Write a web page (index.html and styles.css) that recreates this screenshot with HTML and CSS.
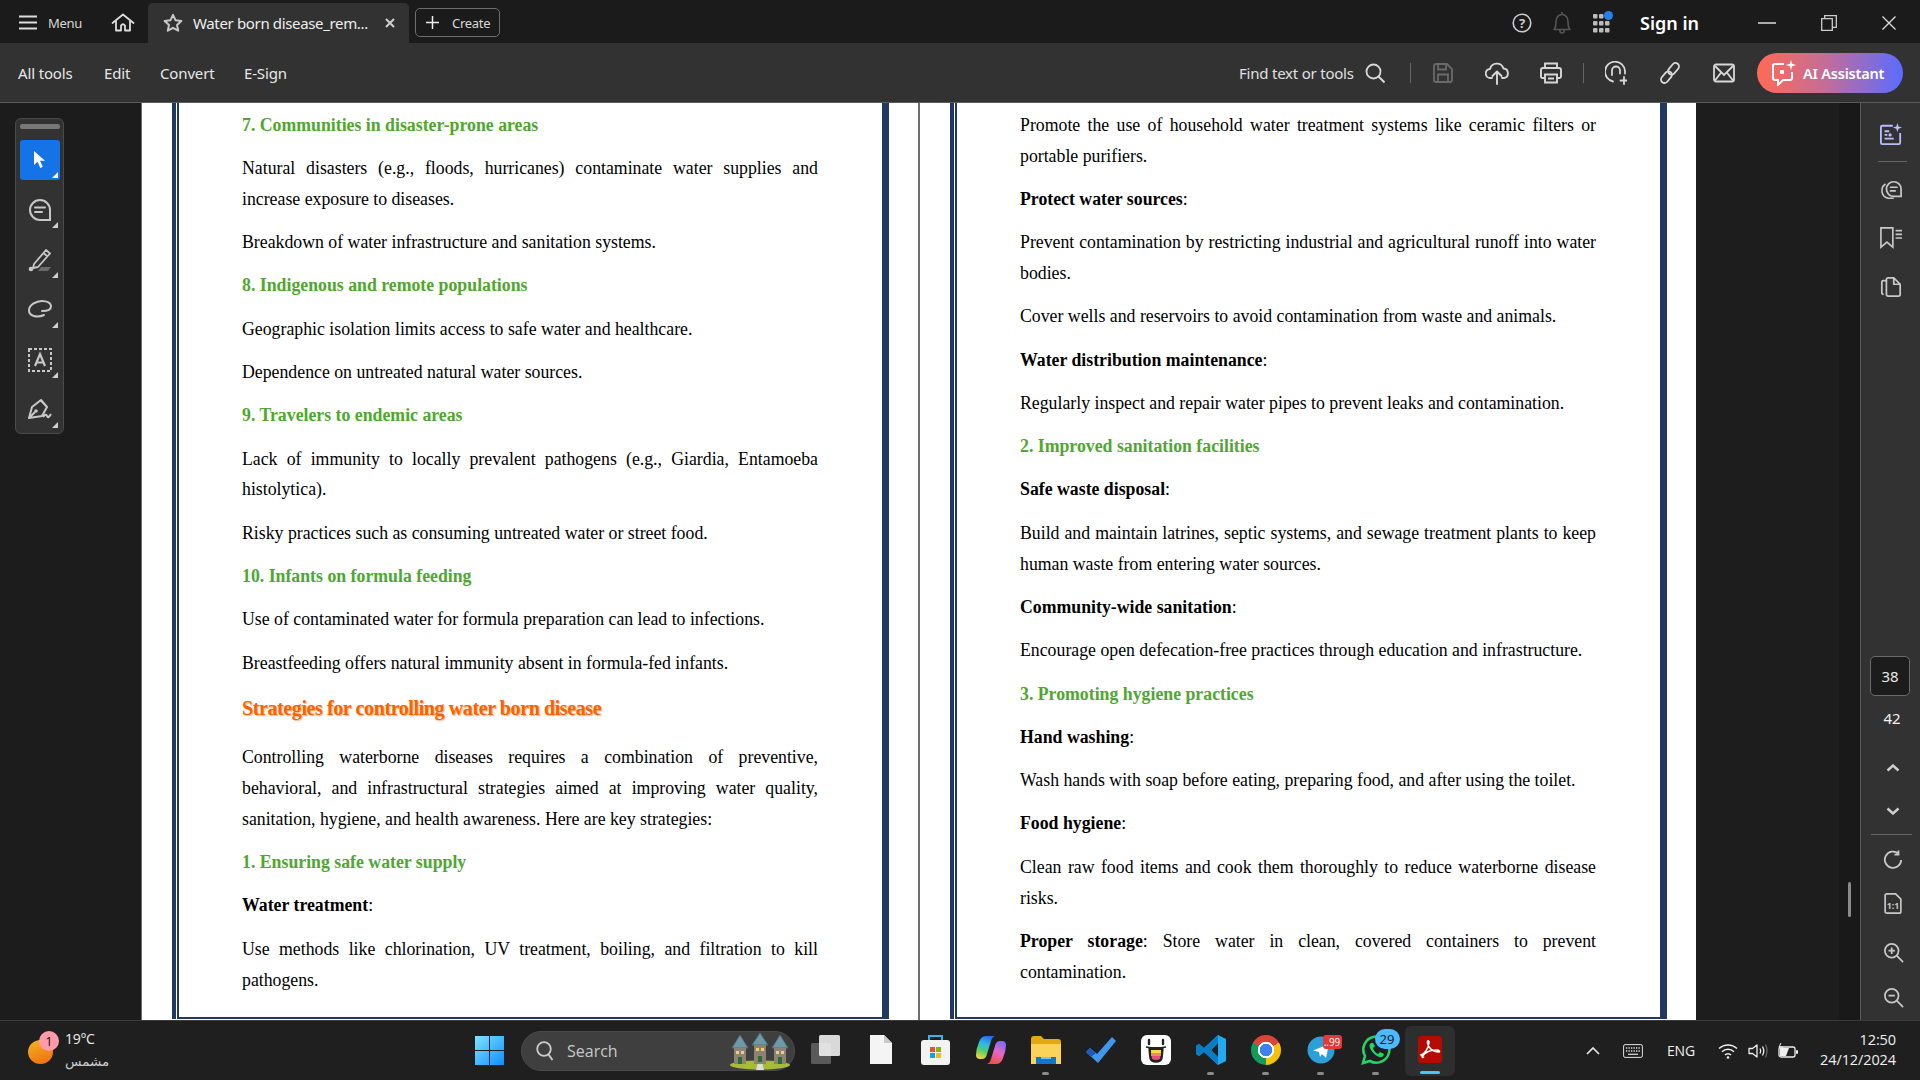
FILE: index.html
```html
<!DOCTYPE html>
<html lang="en">
<head>
<meta charset="utf-8">
<title>Water born disease</title>
<link rel="stylesheet" href="styles.css">
</head>
<body>
<header class="titlebar">
  <svg class="i-burger" viewBox="0 0 18 15"><path d="M0 1.500h18M0 7.500h18M0 13.500h18" stroke="#ddd" stroke-width="2" fill="none"/></svg>
  <span class="menu-label">Menu</span>
  <svg class="i-home" viewBox="0 0 24 20"><path d="M1.500 10 12 1.500 22.500 10M5 8v9.500h5v-5q2-2.500 4 0v5h5V8" stroke="#ddd" stroke-width="1.800" fill="none" stroke-linejoin="round" stroke-linecap="round"/></svg>
  <div class="tab">
    <svg class="i-star" viewBox="0 0 20 20"><path d="m10 1.800 2.500 5.400 5.900.7-4.400 4 1.200 5.800L10 14.800l-5.200 2.900L6 11.900l-4.400-4 5.900-.7z" stroke="#c8c8c8" stroke-width="2" fill="none" stroke-linejoin="round"/></svg>
    <span class="tab-title">Water born disease_rem...</span>
    <svg class="i-tabx" viewBox="0 0 10 10"><path d="m1 1 8 8M9 1 1 9" stroke="#cfcfcf" stroke-width="2" fill="none"/></svg>
  </div>
  <div class="create">
    <svg class="i-plus" viewBox="0 0 13 13"><path d="M6.500 0v13M0 6.500h13" stroke="#eee" stroke-width="1.500"/></svg>
    <span>Create</span>
  </div>
  <svg class="i-help" viewBox="0 0 20 20"><circle cx="10" cy="10" r="8.800" stroke="#ccc" stroke-width="1.600" fill="none"/><text x="10" y="14.500" text-anchor="middle" class="svg-q">?</text></svg>
  <svg class="i-bell" viewBox="0 0 18 24"><path d="M1 18.500c2-2 2-4 2-8 0-4 2.500-7 6-7s6 3 6 7c0 4 0 6 2 8zM7 19v2q2 2 4 0v-2M9 1v2.500" stroke="#555" stroke-width="1.600" fill="none" stroke-linejoin="round"/></svg>
  <svg class="i-apps" viewBox="0 0 20 24"><g fill="#bbb"><rect x="0" y="3" width="4.500" height="4.500" rx="1"/><rect x="6" y="3" width="4.500" height="4.500" rx="1"/><rect x="0" y="10" width="4.500" height="4.500" rx="1"/><rect x="6" y="10" width="4.500" height="4.500" rx="1"/><rect x="12" y="10" width="4.500" height="4.500" rx="1"/><rect x="0" y="17" width="4.500" height="4.500" rx="1"/><rect x="6" y="17" width="4.500" height="4.500" rx="1"/><rect x="12" y="17" width="4.500" height="4.500" rx="1"/></g><circle cx="15.500" cy="4.500" r="4.500" fill="#2680eb"/></svg>
  <span class="signin">Sign in</span>
  <svg class="i-min" viewBox="0 0 18 2"><path d="M0 1h18" stroke="#ddd" stroke-width="1.500"/></svg>
  <svg class="i-restore" viewBox="0 0 16 16"><path d="M.7 3.700h10.600v11.600H.7zM3.700 3.500V.7h11.600v11.600h-3.800" stroke="#ccc" stroke-width="1.300" fill="none"/></svg>
  <svg class="i-close" viewBox="0 0 14 14"><path d="m.5.500 13 13M13.500.5l-13 13" stroke="#ddd" stroke-width="1.300"/></svg>
</header>

<nav class="toolbar">
  <span class="tool-link first">All tools</span>
  <span class="tool-link edit">Edit</span>
  <span class="tool-link convert">Convert</span>
  <span class="tool-link esign">E-Sign</span>
  <span class="find">Find text or tools</span>
  <svg class="tb-search" viewBox="0 0 20 20"><circle cx="8.500" cy="8.500" r="7" stroke="#d8d8d8" stroke-width="1.800" fill="none"/><path d="m13.500 13.500 6 6" stroke="#d8d8d8" stroke-width="2"/></svg>
  <i class="tb-div d1"></i>
  <svg class="tb-save" viewBox="0 0 20 20"><path d="M1 3q0-2 2-2h11l5 5v11q0 2-2 2H3q-2 0-2-2zM5 1.500v5h8v-5M5 18.500v-7h10v7" stroke="#6a6a6a" stroke-width="1.800" fill="none"/></svg>
  <svg class="tb-upload" viewBox="0 0 24 24"><path d="M7 17H5.500A4.500 4.500 0 0 1 5 8a7 7 0 0 1 13.500-.5A4.800 4.800 0 0 1 19 17h-2M12 23V10.500M7.500 15l4.500-4.500 4.500 4.500" stroke="#d8d8d8" stroke-width="1.900" fill="none" stroke-linecap="round" stroke-linejoin="round"/></svg>
  <svg class="tb-print" viewBox="0 0 22 22"><path d="M5 6V1.500h12V6M5 16H2.500Q1 16 1 14.500V8q0-2 2-2h16q2 0 2 2v6.500q0 1.500-1.500 1.500H17M5 12.500h12v8H5zM8 16.500h6" stroke="#d8d8d8" stroke-width="1.900" fill="none"/></svg>
  <i class="tb-div d2"></i>
  <svg class="tb-share" viewBox="0 0 22 24"><path d="M8 20.500A10 10 0 1 1 20 10v2.500M7 14V9.500a4 4 0 0 1 8 0v3M15.500 19.500h7M19 16v7" stroke="#d8d8d8" stroke-width="1.800" fill="none" stroke-linecap="round"/></svg>
  <svg class="tb-link" viewBox="0 0 22 22"><g transform="rotate(-50 11 11)" stroke="#d8d8d8" stroke-width="1.800" fill="none"><rect x="-1" y="7.500" width="13" height="7" rx="3.500"/><rect x="10" y="7.500" width="13" height="7" rx="3.500"/></g></svg>
  <svg class="tb-mail" viewBox="0 0 22 22"><rect x="1" y="2.500" width="20" height="17" rx="2" stroke="#d8d8d8" stroke-width="1.800" fill="none"/><path d="m2 4 9 9 9-9M2 18.500 8.500 10M20 18.500 13.500 10" stroke="#d8d8d8" stroke-width="1.800" fill="none"/></svg>
  <div class="ai-btn">
    <svg class="ai-icon" viewBox="0 0 24 26"><path d="M12 4H3Q1 4 1 6v12q0 2 2 2h3v5l5-5h7q2 0 2-2v-6" stroke="#fff" stroke-width="2" fill="none"/><rect x="8" y="10" width="4" height="4" rx="1" fill="#fff"/><path d="m19 0 1.200 3.800L24 5l-3.800 1.200L19 10l-1.200-3.800L14 5l3.800-1.200z" fill="#fff"/></svg>
    <span>AI Assistant</span>
  </div>
</nav>

<main class="workspace">
  <aside class="left-rail">
    <div class="tool-palette">
      <i class="grip"></i>
      <div class="tool selected">
        <svg viewBox="0 0 16 20"><path d="M2 1v14l3.500-3.200 2.800 6.200 2.500-1.200-2.800-6H13z" fill="#fff"/></svg>
      </div>
      <div class="tool">
        <svg viewBox="0 0 24 24"><path d="M12 2a10 10 0 1 0 0 20h10V12A10 10 0 0 0 12 2zM7 9.500h10M7 14h7" stroke="#c8c8c8" stroke-width="2" fill="none" stroke-linecap="round"/></svg>
      </div>
      <div class="tool">
        <svg viewBox="0 0 24 24"><path d="m6 16 12-14 4 3.500-12 13.500-5 1zM15.500 5l4 3.500" stroke="#c8c8c8" stroke-width="1.800" fill="none" stroke-linejoin="round"/><circle cx="3" cy="21" r="2.300" fill="#c8c8c8"/><path d="M10 23h10l3-4H13z" fill="#6a6a6a"/></svg>
      </div>
      <div class="tool">
        <svg viewBox="0 0 24 24"><path d="M16 17C9 20 1 18 1 12.500 1 7 8 3 14 3c5 0 9 2 9 5.500 0 3.500-5 4.500-9 4.500" stroke="#c8c8c8" stroke-width="2" fill="none" stroke-linecap="round"/></svg>
      </div>
      <div class="tool">
        <svg viewBox="0 0 24 24"><rect x="1" y="1" width="22" height="22" stroke="#c8c8c8" stroke-width="2" stroke-dasharray="3 2" fill="none"/><path d="m7 18 5-12 5 12M8.500 14.500h7" stroke="#c8c8c8" stroke-width="2.200" fill="none"/></svg>
      </div>
      <div class="tool">
        <svg viewBox="0 0 24 24"><path d="M1 20 4 9l9-7 6 7-5 9zM1 20l6-6M13 2.500 19 9M15 19q3-4 4-1t4-2" stroke="#c8c8c8" stroke-width="2" fill="none" stroke-linejoin="round"/><circle cx="8" cy="13" r="1.800" fill="#c8c8c8"/></svg>
      </div>
    </div>
  </aside>

  <section class="pages">
    <article class="page">
      <div class="frame"><div class="frame-inner">
        <h3>7. Communities in disaster-prone areas</h3>
        <p>Natural disasters (e.g., floods, hurricanes) contaminate water supplies and increase exposure to diseases.</p>
        <p>Breakdown of water infrastructure and sanitation systems.</p>
        <h3>8. Indigenous and remote populations</h3>
        <p>Geographic isolation limits access to safe water and healthcare.</p>
        <p>Dependence on untreated natural water sources.</p>
        <h3>9. Travelers to endemic areas</h3>
        <p>Lack of immunity to locally prevalent pathogens (e.g., Giardia, Entamoeba histolytica).</p>
        <p>Risky practices such as consuming untreated water or street food.</p>
        <h3>10. Infants on formula feeding</h3>
        <p>Use of contaminated water for formula preparation can lead to infections.</p>
        <p>Breastfeeding offers natural immunity absent in formula-fed infants.</p>
        <h2>Strategies for controlling water born disease</h2>
        <p>Controlling waterborne diseases requires a combination of preventive, behavioral, and infrastructural strategies aimed at improving water quality, sanitation, hygiene, and health awareness. Here are key strategies:</p>
        <h3>1. Ensuring safe water supply</h3>
        <p><b>Water treatment</b>:</p>
        <p>Use methods like chlorination, UV treatment, boiling, and filtration to kill pathogens.</p>
      </div></div>
    </article>
    <article class="page">
      <div class="frame"><div class="frame-inner">
        <p>Promote the use of household water treatment systems like ceramic filters or portable purifiers.</p>
        <p><b>Protect water sources</b>:</p>
        <p>Prevent contamination by restricting industrial and agricultural runoff into water bodies.</p>
        <p>Cover wells and reservoirs to avoid contamination from waste and animals.</p>
        <p><b>Water distribution maintenance</b>:</p>
        <p>Regularly inspect and repair water pipes to prevent leaks and contamination.</p>
        <h3>2. Improved sanitation facilities</h3>
        <p><b>Safe waste disposal</b>:</p>
        <p>Build and maintain latrines, septic systems, and sewage treatment plants to keep human waste from entering water sources.</p>
        <p><b>Community-wide sanitation</b>:</p>
        <p>Encourage open defecation-free practices through education and infrastructure.</p>
        <h3>3. Promoting hygiene practices</h3>
        <p><b>Hand washing</b>:</p>
        <p>Wash hands with soap before eating, preparing food, and after using the toilet.</p>
        <p><b>Food hygiene</b>:</p>
        <p>Clean raw food items and cook them thoroughly to reduce waterborne disease risks.</p>
        <p><b>Proper storage</b>: Store water in clean, covered containers to prevent contamination.</p>
      </div></div>
    </article>
  </section>

  <div class="gutter"></div>
  <div class="scroll-strip"><i class="scroll-thumb"></i></div>

  <aside class="right-rail">
    <svg class="rr rr-ai" viewBox="0 0 24 24"><path d="M14 3H2.500Q1 3 1 4.500v17Q1 23 2.500 23h18q1.500 0 1.500-1.500V11M5 9h5M5 13h3M5 17h10" stroke="#b9bcff" stroke-width="2" fill="none"/><circle cx="11" cy="13" r="1.800" fill="#b9bcff"/><path d="m19 0 1.200 3.800L24 5l-3.800 1.200L19 10l-1.200-3.800L14 5l3.800-1.200z" fill="#b9bcff"/></svg>
    <i class="rr-div top"></i>
    <svg class="rr rr-comments" viewBox="0 0 24 24"><path d="M15 3a8 8 0 1 0 0 16h8v-8a8 8 0 0 0-8-8zM11.500 9h7M11.500 13h5" stroke="#c8c8c8" stroke-width="1.900" fill="none" stroke-linecap="round"/><path d="M6 5.500a8.500 8.500 0 0 0 3 15.500h6" stroke="#c8c8c8" stroke-width="1.800" fill="none"/></svg>
    <svg class="rr rr-bookmark" viewBox="0 0 24 24"><path d="M1 1h13v21l-6.500-5.500L1 22zM17 4h7M17 8h7M17 12h7" stroke="#c8c8c8" stroke-width="1.800" fill="none"/></svg>
    <svg class="rr rr-pages" viewBox="0 0 24 24"><path d="M9 2h6l7 7v11q0 2-2 2H9q-2 0-2-2V4q0-2 2-2zM15 2v7h7M7 5H3.500Q2 5 2 7v11q0 2 2 2" stroke="#c8c8c8" stroke-width="1.900" fill="none"/></svg>
    <div class="pg-current">38</div>
    <div class="pg-total">42</div>
    <svg class="rr-chev up" viewBox="0 0 14 8"><path d="m1.500 6.500 5.500-5 5.500 5" stroke="#d0d0d0" stroke-width="2.400" fill="none"/></svg>
    <svg class="rr-chev down" viewBox="0 0 14 8"><path d="m1.500 1.500 5.500 5 5.500-5" stroke="#d0d0d0" stroke-width="2.400" fill="none"/></svg>
    <i class="rr-div bottom"></i>
    <svg class="rr rr-rotate" viewBox="0 0 22 22"><path d="M20 11a9 9 0 1 1-3-7M17 .5V5h-4.500" stroke="#c8c8c8" stroke-width="2" fill="none"/></svg>
    <svg class="rr rr-fit" viewBox="0 0 20 24"><path d="M3 1h10l6 6v14q0 2-2 2H3q-2 0-2-2V3q0-2 2-2z" stroke="#c8c8c8" stroke-width="1.900" fill="none"/><text x="10" y="18" text-anchor="middle" class="svg-fit">1:1</text></svg>
    <svg class="rr rr-zi" viewBox="0 0 22 22"><circle cx="8.500" cy="8.500" r="7.500" stroke="#c8c8c8" stroke-width="1.900" fill="none"/><path d="m14 14 7 7M5 8.500h7M8.500 5v7" stroke="#c8c8c8" stroke-width="1.900"/></svg>
    <svg class="rr rr-zo" viewBox="0 0 22 22"><circle cx="8.500" cy="8.500" r="7.500" stroke="#c8c8c8" stroke-width="1.900" fill="none"/><path d="m14 14 7 7M5 8.500h7" stroke="#c8c8c8" stroke-width="1.900"/></svg>
  </aside>
</main>

<footer class="taskbar">
  <div class="weather">
    <span class="sun"><b class="sun-badge">1</b></span>
    <div class="weather-text"><span>19°C</span><span class="ar" lang="ar">مشمس</span></div>
  </div>
  <svg class="winlogo" viewBox="0 0 29 29"><defs><linearGradient id="wg" x1="0" y1="0" x2="1" y2="1"><stop offset="0" stop-color="#7fe3ff"/><stop offset="1" stop-color="#0e8fff"/></linearGradient></defs><path d="M0 0h14v14H0zM15 0h14v14H15zM0 15h14v14H0zM15 15h14v14H15z" fill="url(#wg)"/></svg>
  <div class="searchbox">
    <svg class="q" viewBox="0 0 18 20"><circle cx="8" cy="8" r="6.800" stroke="#ccc" stroke-width="1.800" fill="none"/><path d="m12.500 13.500 4 5.500" stroke="#ccc" stroke-width="2"/></svg>
    <span>Search</span>
    <svg class="houses" viewBox="0 0 60 38"><ellipse cx="30" cy="33" rx="30" ry="4.500" fill="#a7bb3b"/><path d="M26 38l2-8h4l2 8z" fill="#ddd"/><g stroke="#4d6d78" stroke-width="1"><path d="M2 16 10 3l8 13z" fill="#6e9aa5"/><path d="M22 13 30 1l8 12z" fill="#6e9aa5"/><path d="M42 16 50 3l8 13z" fill="#6e9aa5"/></g><path d="M4 16h12v16H4zM24 13h12v19H24zM44 16h12v16H44z" fill="#8c8471"/><path d="M6 19h3v3H6zM11 19h3v3h-3zM26 16h3v3h-3zM31 16h3v3h-3zM46 19h3v3h-3zM51 19h3v3h-3z" fill="#ead36a"/><path d="M8 25h4v7H8zM28 24h4v6h-4zM48 25h4v7h-4z" fill="#2f6b3a"/></svg>
  </div>
  <div class="app">
    <svg width="29" height="29" viewBox="0 0 29 29"><rect x="0" y="8" width="20" height="21" rx="1.500" fill="#5a5a5a"/><rect x="8" y="0" width="21" height="21" rx="1.500" fill="#f4f4f4" fill-opacity=".88"/></svg>
  </div>
  <div class="app">
    <svg width="22" height="29" viewBox="0 0 22 29"><path d="M0 0h14l8 8v21H0z" fill="#f4f4f4"/><path d="M14 0v8h8z" fill="#c9c9c9"/></svg>
  </div>
  <div class="app">
    <svg width="29" height="30" viewBox="0 0 29 30"><path d="M8 6V1h13v5" stroke="#35b4ec" stroke-width="2" fill="none"/><rect x="0" y="5" width="29" height="25" rx="3" fill="#f2f2f2"/><rect x="9" y="12" width="5" height="5" fill="#f25022"/><rect x="15" y="12" width="5" height="5" fill="#7fba00"/><rect x="9" y="18" width="5" height="5" fill="#00a4ef"/><rect x="15" y="18" width="5" height="5" fill="#ffb900"/></svg>
  </div>
  <div class="app">
    <svg width="30" height="30" viewBox="0 0 30 30"><defs><linearGradient id="cp1" x1=".6" y1="0" x2=".3" y2="1"><stop offset="0" stop-color="#2470e8"/><stop offset=".35" stop-color="#2fb8e8"/><stop offset=".65" stop-color="#50cf70"/><stop offset="1" stop-color="#f4d62e"/></linearGradient><linearGradient id="cp2" x1=".7" y1="0" x2=".3" y2="1"><stop offset="0" stop-color="#7c6cf0"/><stop offset=".45" stop-color="#e468c8"/><stop offset="1" stop-color="#f0503c"/></linearGradient></defs><path d="M10 1h9q-3 1-4 5l-4 13q-1 5-5 5H4q-4 0-4-4 0-6 3-13 2-6 7-6z" fill="url(#cp1)"/><path d="M20 29h-9q3-1 4-5l4-13q1-5 5-5h2q4 0 4 4 0 6-3 13-2 6-7 6z" fill="url(#cp2)"/></svg>
  </div>
  <div class="app running">
    <svg width="30" height="28" viewBox="0 0 30 28"><path d="M0 3q0-3 3-3h7l3 3h14q3 0 3 3v5H0z" fill="#e3a90f"/><path d="M0 8h30v20H0z" fill="#fbd35b"/><rect x="5" y="21" width="20" height="7" fill="#0f78c8"/><rect x="10" y="21" width="10" height="2" fill="#7cc4f0"/></svg>
  </div>
  <div class="app">
    <svg width="30" height="26" viewBox="0 0 30 26"><path d="M0 15l4-4 7 6L26 0l4 4-18 22z" fill="#3f98ea"/><path d="M0 15l4-4 6 5-5 4z" fill="#1b5cb8"/></svg>
  </div>
  <div class="app">
    <svg width="30" height="30" viewBox="0 0 30 30"><rect width="30" height="30" rx="6" fill="#fff"/><path d="M8 5v4M22 5v4" stroke="#222" stroke-width="2.400" stroke-linecap="round"/><path d="M5 12q10 2 20 0M8 13l1 10q1 4 6 4t6-4l1-10z" fill="#222" stroke="#222" stroke-width="1.500"/><path d="M10 15h10v3H10z" fill="#f8d84a"/><path d="M10 18h10v3H10z" fill="#f08a5a"/><path d="M10.500 21h9l-.5 3q-4 2-8 0z" fill="#e54f7a"/></svg>
  </div>
  <div class="app running">
    <svg width="30" height="30" viewBox="0 0 30 30"><path d="M22 0 30 4v22l-8 4L8 17l-5 4-3-2v-8l3-2 5 4zm0 8-7 7 7 7z" fill="#23a9f2"/><path d="M22 0 8 13 3 9 0 11v8l3 2 5-4 14 13v-8l-7-7 7-7z" fill="#0a7cc5"/></svg>
  </div>
  <div class="app running"><span class="chrome"></span></div>
  <div class="app running">
    <span class="telegram">
      <svg width="28" height="28" viewBox="0 0 28 28"><circle cx="14" cy="14" r="13.500" fill="#2ba0d8"/><path d="M6 14.500 22 8l-3 14-4-4-2 3-1-5z" fill="#fff"/></svg>
      <b class="tg-badge">..99</b>
    </span>
  </div>
  <div class="app running">
    <span class="whatsapp">
      <svg width="30" height="30" viewBox="0 0 30 30"><path d="M2 28l2-7A13 13 0 1 1 9 26z" stroke="#25d366" stroke-width="2.600" fill="none"/><path d="M10 8q-3 2 0 7t8 7q4 1 5-3l-4-2-2 2q-4-2-5-6l2-2-2-3z" fill="#25d366"/></svg>
      <b class="wa-badge">29</b>
    </span>
  </div>
  <div class="app active">
    <svg width="24" height="27" viewBox="0 0 24 27"><rect width="24" height="27" rx="3" fill="#b30b00"/><path d="M3 19c3-1 7-5 8-12 .300-3-2-3-1.500 0 1 5 5 9 11 9 2 0 1-2-2-2-5 0-11 2-14 6-1 1 0 2 1 1z" stroke="#fff" stroke-width="1.500" fill="none"/></svg>
  </div>
  <div class="tray">
    <svg class="t-chev" viewBox="0 0 14 8"><path d="m1 7 6-6 6 6" stroke="#e6e6e6" stroke-width="1.700" fill="none"/></svg>
    <svg class="t-kbd" viewBox="0 0 20 14"><rect x=".6" y=".6" width="18.800" height="12.800" rx="1.500" stroke="#e0e0e0" stroke-width="1" fill="none"/><path d="M3 4h14M3 7h14" stroke="#e0e0e0" stroke-width="1.300" stroke-dasharray="1.300 1.200"/><path d="M5 10.300h10" stroke="#e0e0e0" stroke-width="1.200"/></svg>
    <span class="t-lang">ENG</span>
    <svg class="t-wifi" viewBox="0 0 20 16"><path d="M1 5.500a13 13 0 0 1 18 0M4 8.800a8.500 8.500 0 0 1 12 0M7 12a4 4 0 0 1 6 0" stroke="#eee" stroke-width="1.500" fill="none"/><circle cx="10" cy="14.500" r="1.300" fill="#eee"/></svg>
    <svg class="t-vol" viewBox="0 0 20 16"><path d="M1 5.500h3.500L9 2v12l-4.500-3.500H1z" stroke="#eee" stroke-width="1.300" fill="none" stroke-linejoin="round"/><path d="M12 5.500q1.500 2.500 0 5M14.500 3.500q2.500 4.500 0 9" stroke="#eee" stroke-width="1.300" fill="none"/><path d="M17.500 1.500q3 6.500 0 13" stroke="#666" stroke-width="1.300" fill="none"/></svg>
    <svg class="t-batt" viewBox="0 0 20 16"><rect x="1" y="4" width="16" height="10" rx="2" stroke="#eee" stroke-width="1.300" fill="none"/><path d="M2 5h9l-3 8H2z" fill="#eee"/><rect x="18" y="7" width="2" height="4" rx="1" fill="#eee"/><path d="M3 0 1 4h4L3 7" stroke="#eee" stroke-width="1" fill="none"/></svg>
    <div class="clock"><span>12:50</span><span>24/12/2024</span></div>
  </div>
</footer>
</body>
</html>
```

FILE: styles.css
```css
* { box-sizing: border-box; }
html, body { margin: 0; padding: 0; }
body {
  width: 1920px;
  height: 1080px;
  overflow: hidden;
  display: flex;
  flex-direction: column;
  background: #1c1c1c;
  font-family: "Noto Sans", "DejaVu Sans", sans-serif;
  color: #e6e6e6;
}
svg { display: block; flex: none; }
i { display: block; }

/* title bar */
.titlebar {
  height: 43px;
  flex: none;
  background: #1b1b1b;
  display: flex;
  align-items: center;
  padding-top: 2px;
}
.i-burger { width: 18px; height: 15px; margin-left: 19px; }
.menu-label { width: 33px; margin-left: 11px; font-size: 13px; color: #d8d8d8; white-space: nowrap; letter-spacing: -.3px; }
.i-home { width: 24px; height: 20px; margin-left: 30px; }
.tab {
  width: 261px;
  height: 40px;
  margin-left: 13px;
  align-self: flex-end;
  background: #323232;
  border-radius: 5px 5px 0 0;
  display: flex;
  align-items: center;
}
.i-star { width: 20px; height: 20px; margin-left: 15px; }
.tab-title { width: 173px; margin-left: 10px; font-size: 15px; color: #eee; white-space: nowrap; letter-spacing: -.35px; }
.i-tabx { width: 10px; height: 10px; margin-left: 19px; }
.create {
  width: 85px;
  height: 29px;
  margin-left: 6px;
  border: 1px solid #6e6e6e;
  border-radius: 5px;
  display: flex;
  align-items: center;
  font-size: 13px;
  color: #d8d8d8;
  letter-spacing: -.3px;
}
.i-plus { width: 13px; height: 13px; margin-left: 10px; margin-right: 13px; }
.i-help { width: 20px; height: 20px; margin-left: 1012px; }
.svg-q { font: 700 13px "Noto Sans", sans-serif; fill: #ccc; }
.i-bell { width: 18px; height: 24px; margin-left: 21px; }
.i-apps { width: 20px; height: 24px; margin-left: 22px; }
.signin { width: 63px; margin-left: 27px; font-size: 18px; font-weight: 600; color: #fff; white-space: nowrap; }
.i-min { width: 18px; height: 2px; margin-left: 55px; }
.i-restore { width: 16px; height: 16px; margin-left: 45px; }
.i-close { width: 14px; height: 14px; margin-left: 45px; }

/* tool bar */
.toolbar {
  height: 60px;
  flex: none;
  background: #323232;
  border-bottom: 1px solid #5a5a5a;
  display: flex;
  align-items: center;
  font-size: 15px;
}
.tool-link { color: #e8e8e8; white-space: nowrap; letter-spacing: -.15px; }
.tool-link.first { width: 55px; margin-left: 18px; }
.tool-link.edit { width: 26px; margin-left: 31px; }
.tool-link.convert { width: 54px; margin-left: 30px; }
.tool-link.esign { width: 43px; margin-left: 30px; }
.find { width: 115px; margin-left: 952px; color: #e0e0e0; white-space: nowrap; letter-spacing: -.22px; }
.tb-search { width: 20px; height: 20px; margin-left: 11px; }
.tb-div { width: 1px; height: 20px; background: #666; }
.tb-div.d1 { margin-left: 25px; }
.tb-div.d2 { margin-left: 21px; }
.tb-save { width: 20px; height: 20px; margin-left: 22px; }
.tb-upload { width: 24px; height: 24px; margin-left: 32px; }
.tb-print { width: 22px; height: 22px; margin-left: 31px; }
.tb-share { width: 22px; height: 24px; margin-left: 21px; }
.tb-link { width: 22px; height: 22px; margin-left: 32px; }
.tb-mail { width: 22px; height: 22px; margin-left: 32px; }
.ai-btn {
  width: 146px;
  height: 40px;
  margin-left: 22px;
  border-radius: 20px;
  background: linear-gradient(90deg, #ff6a55 0%, #c76d94 45%, #5a6cff 100%);
  display: flex;
  align-items: center;
  font-size: 14.500px;
  font-weight: 600;
  color: #fff;
  white-space: nowrap;
  letter-spacing: -.2px;
}
.ai-icon { width: 24px; height: 26px; margin-left: 15px; margin-right: 7px; }

/* workspace */
.workspace {
  flex: 1;
  min-height: 0;
  display: flex;
  overflow: hidden;
}
.left-rail {
  width: 142px;
  flex: none;
  background: #1c1c1c;
  border-right: 1px solid #6e6e6e;
  padding: 15px 0 0 15px;
}
.tool-palette {
  width: 49px;
  height: 316px;
  background: #323232;
  border: 1px solid #4a4a4a;
  border-radius: 6px;
  display: flex;
  flex-direction: column;
  align-items: center;
  padding-top: 5px;
}
.grip { width: 40px; height: 5px; background: #777; border-radius: 2px; margin-bottom: 11px; flex: none; }
.tool {
  width: 40px;
  height: 40px;
  margin-bottom: 10px;
  flex: none;
  display: flex;
  align-items: center;
  justify-content: center;
  position: relative;
}
.tool svg { width: 24px; height: 24px; }
.tool.selected { background: #1473e6; border-radius: 3px; }
.tool.selected svg { width: 16px; height: 20px; }
.tool::after {
  content: "";
  position: absolute;
  right: 2px;
  bottom: 2px;
  border-style: solid;
  border-width: 0 0 6px 6px;
  border-color: transparent transparent #d0d0d0 transparent;
}
.tool.selected::after { border-bottom-color: #fff; }

/* pages */
.pages {
  width: 1554px;
  flex: none;
  display: flex;
  column-gap: 2px;
  background: #6e6e6e;
}
.page {
  width: 776px;
  flex: none;
  background: #fff;
  padding: 0 29px 1px 30px;
  font-family: "Liberation Serif", serif;
  color: #000;
}
.frame {
  height: 100%;
  border-left: 4px solid #1f3864;
  border-right: 7px solid #1f3864;
}
.frame-inner {
  height: 100%;
  margin-left: 1px;
  border-left: 2px solid #1f3864;
  border-bottom: 2px solid #1f3864;
  padding: 6.600px 64px 0 63px;
}
.frame-inner p, .frame-inner h3 {
  margin: 0 0 12.400px;
  line-height: 30.900px;
  font-size: 17.780px;
  text-align: justify;
}
.frame-inner h3 { color: #4ea72e; font-weight: 700; text-align: left; }
.frame-inner h2 {
  margin: 0 0 16px;
  line-height: 35px;
  font-size: 20px;
  font-weight: 700;
  letter-spacing: -.4px;
  color: #ff6000;
  text-shadow: 1px 1px 1px #f7b48c;
}

/* scroll area and right rail */
.gutter { width: 143px; flex: none; background: #1d1d1d; }
.scroll-strip { width: 21px; flex: none; background: #191919; position: relative; }
.scroll-thumb { position: absolute; left: 9px; top: 779px; width: 3px; height: 35px; background: #8a8a8a; border-radius: 2px; }
.right-rail {
  width: 60px;
  flex: none;
  background: #323232;
  border-left: 1px solid #5a5a5a;
  display: flex;
  flex-direction: column;
  align-items: flex-start;
  padding: 20px 0 0 19px;
}
.rr { width: 22px; height: 22px; }
.rr-div { height: 1px; background: #666; flex: none; }
.rr-div.top { width: 29px; margin: 16px 0 17px -2px; }
.rr-comments { margin-bottom: 26px; }
.rr-bookmark { margin-bottom: 27px; }
.pg-current {
  width: 40px;
  height: 40px;
  margin: 358px 0 0 -10px;
  background: #1c1c1c;
  border: 1px solid #6a6a6a;
  border-radius: 5px;
  display: flex;
  align-items: center;
  justify-content: center;
  font-size: 15px;
  color: #e8e8e8;
}
.pg-total { width: 40px; margin: 11px 0 0 -8px; text-align: center; font-size: 15px; line-height: 22px; color: #f0f0f0; }
.rr-chev { width: 14px; height: 8px; margin-left: 6px; }
.rr-chev.up { margin-top: 35px; }
.rr-chev.down { margin-top: 35px; }
.rr-div.bottom { width: 41px; margin: 19px 0 15px -9px; }
.rr-rotate { width: 20px; height: 20px; margin-left: 3px; }
.rr-fit { width: 18px; height: 21px; margin: 23px 0 0 4px; }
.svg-fit { font: 700 10px "Noto Sans", sans-serif; fill: #c8c8c8; }
.rr-zi { width: 20px; height: 20px; margin: 29px 0 0 4px; }
.rr-zo { width: 20px; height: 20px; margin: 25px 0 0 4px; }

/* task bar */
.taskbar {
  height: 60px;
  flex: none;
  background: #1f1f1f;
  border-top: 1px solid #3a3a3a;
  display: flex;
  align-items: center;
  font-family: "Open Sans", "DejaVu Sans", sans-serif;
}
.weather { width: 475px; flex: none; display: flex; align-items: center; padding-left: 28px; }
.sun {
  width: 25px;
  height: 24px;
  margin-top: 2px;
  border-radius: 50%;
  background: linear-gradient(160deg, #f2b522, #f06a10);
  position: relative;
}
.sun-badge {
  position: absolute;
  left: 11px;
  top: -9px;
  width: 20px;
  height: 20px;
  border-radius: 50%;
  background: #ff9aa8;
  color: #111;
  font-size: 13px;
  font-weight: 400;
  line-height: 20px;
  text-align: center;
}
.weather-text { display: flex; flex-direction: column; margin-left: 12px; margin-top: -1px; font-size: 14px; line-height: 22px; color: #eee; letter-spacing: -.3px; }
.weather-text .ar { font-family: "DejaVu Sans", sans-serif; font-size: 13.500px; color: #ccc; letter-spacing: 0; }
.winlogo { width: 29px; height: 29px; }
.searchbox {
  width: 274px;
  height: 40px;
  margin-left: 17px;
  margin-right: 3px;
  flex: none;
  background: #3f3f3f;
  border: 1px solid #4a4a4a;
  border-radius: 20px;
  display: flex;
  align-items: center;
  font-size: 16px;
  color: #c8c8c8;
}
.q { width: 18px; height: 20px; margin-left: 14px; margin-right: 13px; }
.searchbox span { width: 163px; }
.houses { width: 60px; height: 38px; }
.app {
  width: 55px;
  height: 50px;
  flex: none;
  display: flex;
  align-items: center;
  justify-content: center;
  position: relative;
  padding-bottom: 2px;
}
.app.running::after {
  content: "";
  position: absolute;
  left: 24px;
  bottom: 1px;
  width: 7px;
  height: 3px;
  border-radius: 2px;
  background: #8a8a8a;
}
.app.active { background: #2e2e2e; border-radius: 6px; width: 50px; margin-left: 2px; margin-right: 3px; }
.app.active::after {
  content: "";
  position: absolute;
  left: 15px;
  bottom: 2px;
  width: 20px;
  height: 3px;
  border-radius: 2px;
  background: #4cc2ff;
}
.chrome {
  width: 30px;
  height: 30px;
  border-radius: 50%;
  background:
    radial-gradient(circle, #3b82f0 0 6px, #fff 6.500px 8px, transparent 8.500px),
    conic-gradient(#db4437 0 60deg, #f4c20d 60deg 180deg, #0f9d58 180deg 300deg, #db4437 300deg);
}
.telegram, .whatsapp { position: relative; display: block; }
.tg-badge {
  position: absolute;
  left: 16px;
  top: -1px;
  width: 19px;
  height: 14px;
  border-radius: 3px;
  background: #e53935;
  color: #fff;
  font-size: 10px;
  font-weight: 400;
  line-height: 14px;
  text-align: center;
}
.wa-badge {
  position: absolute;
  left: 14px;
  top: -6px;
  width: 25px;
  height: 20px;
  border-radius: 10px;
  background: #4cb8ff;
  color: #111;
  font-size: 13px;
  font-weight: 400;
  line-height: 20px;
  text-align: center;
}
.tray { display: flex; align-items: center; flex: 1; padding-left: 128px; }
.t-chev { width: 14px; height: 8px; }
.t-kbd { width: 20px; height: 14px; margin-left: 23px; }
.t-lang { width: 28px; margin-left: 24px; font-size: 14px; color: #eee; letter-spacing: -.2px; white-space: nowrap; }
.t-wifi { width: 20px; height: 16px; margin-left: 23px; }
.t-vol { width: 20px; height: 16px; margin-left: 10px; }
.t-batt { width: 20px; height: 16px; margin-left: 10px; }
.clock {
  width: 78px;
  margin-left: 20px;
  margin-top: -2px;
  display: flex;
  flex-direction: column;
  align-items: flex-end;
  font-size: 14.500px;
  line-height: 20px;
  color: #eee;
  white-space: nowrap;
  letter-spacing: -.1px;
}
```
